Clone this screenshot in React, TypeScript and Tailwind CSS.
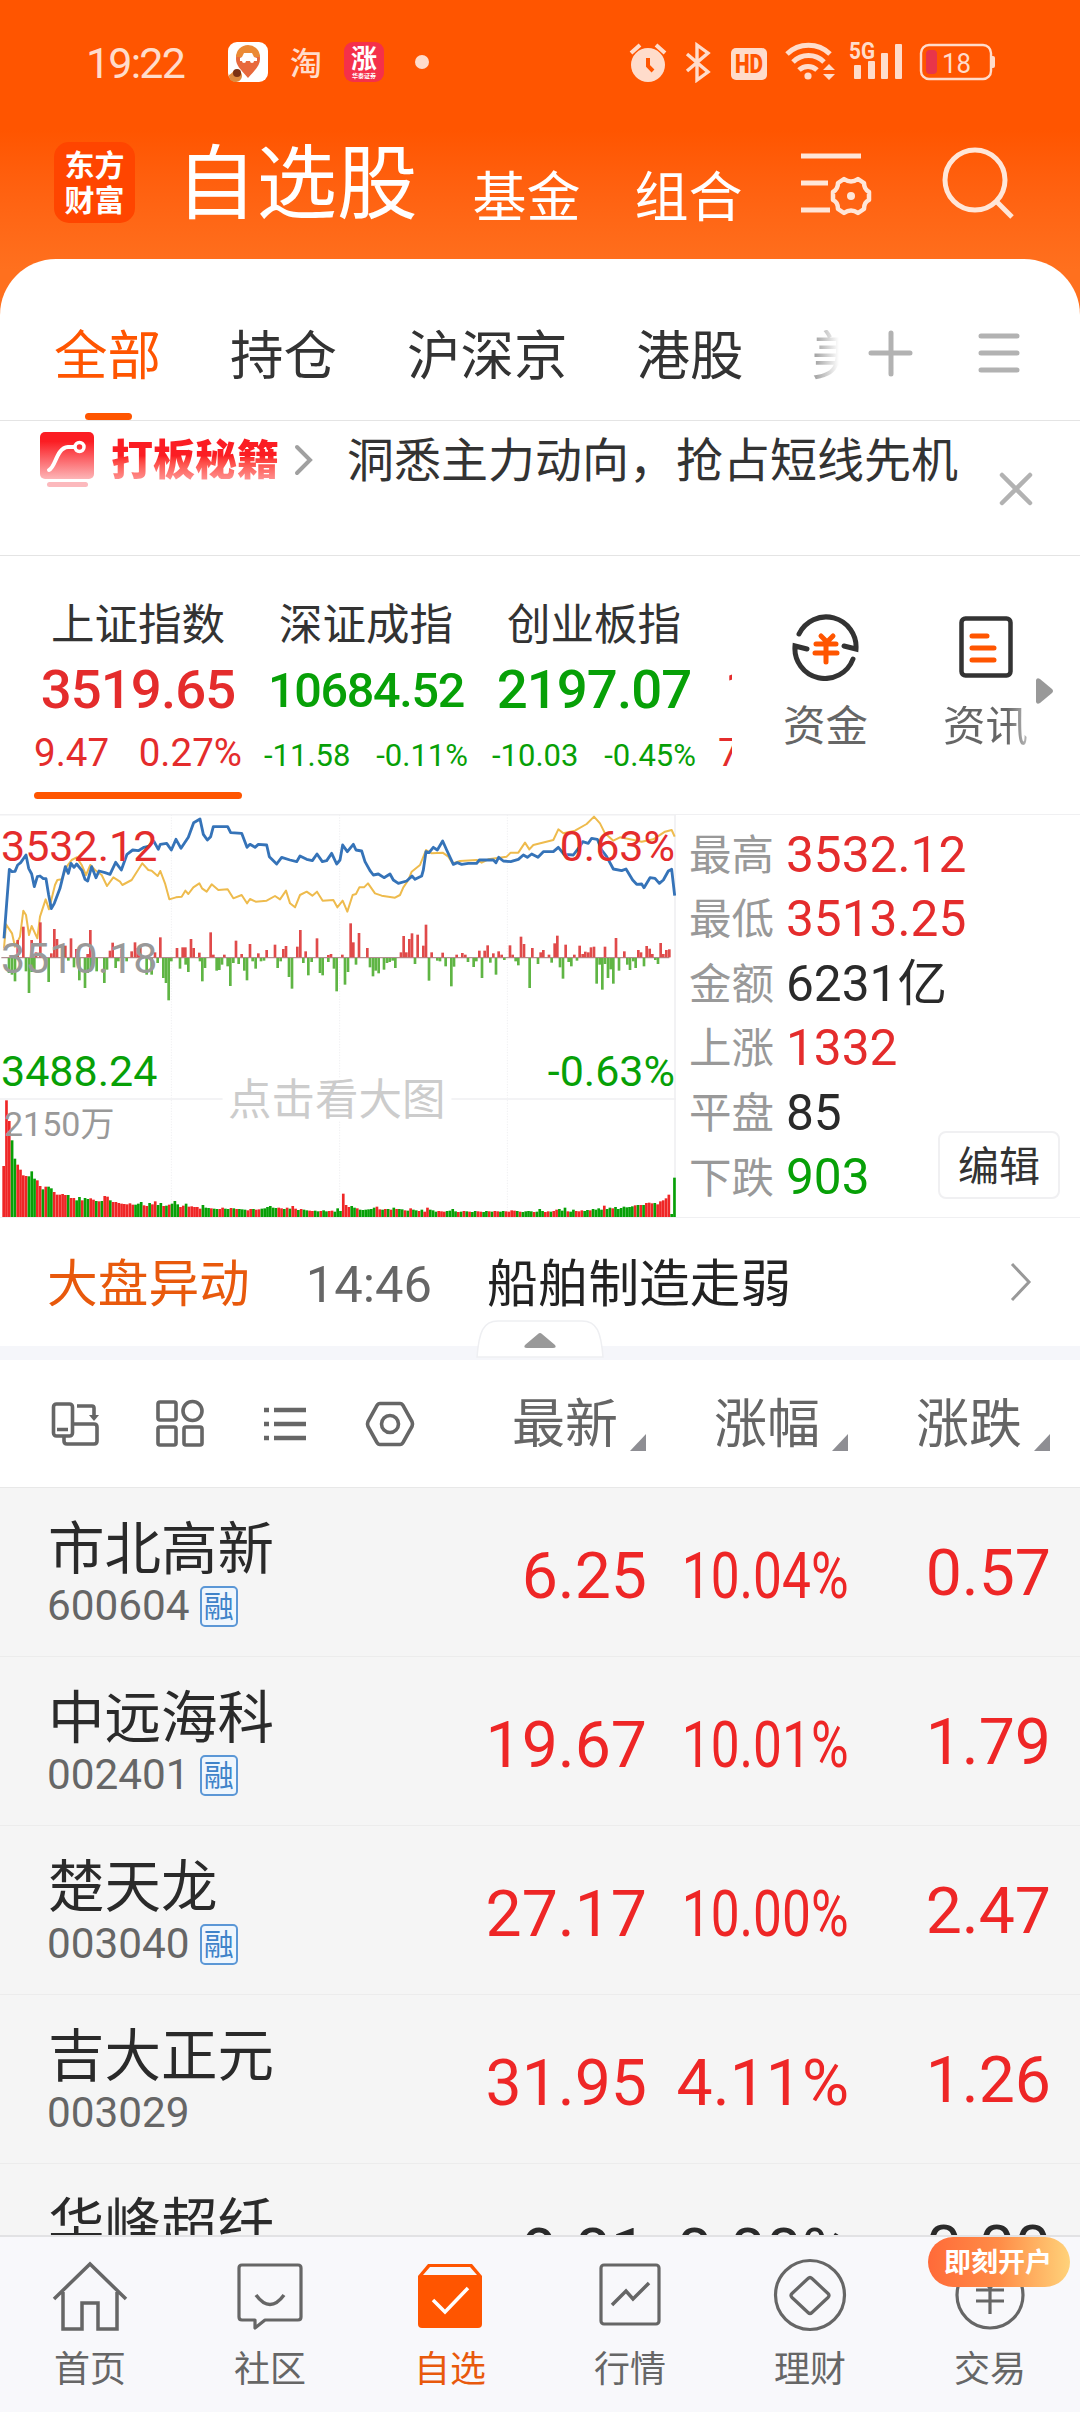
import type { ReactNode } from "react";
import clsx from "clsx";

type Point = [number, number];

// chart data, in chart units (3 per css pixel)
const PRICE: Point[] = [
  [12, 415], [20, 310], [28, 208], [36, 215], [45, 214], [53, 195], [62, 188], [78, 165], [86, 205], [95, 222],
  [103, 260], [112, 230], [120, 228], [130, 236], [138, 236], [146, 285], [154, 326], [163, 310], [180, 265],
  [196, 200], [205, 220], [213, 190], [222, 202], [230, 192], [246, 212], [255, 238], [263, 243], [275, 200],
  [288, 233], [297, 213], [315, 218], [330, 223], [347, 187], [364, 210], [381, 163], [398, 150], [415, 152],
  [432, 142], [448, 138], [461, 123], [475, 148], [481, 133], [500, 130], [514, 150], [528, 118], [543, 145],
  [565, 112], [581, 68], [600, 57], [610, 103], [622, 120], [632, 110], [640, 80], [683, 80], [692, 98],
  [725, 100], [741, 142], [750, 133], [765, 142], [775, 133], [800, 135], [808, 170], [830, 192], [845, 172],
  [870, 180], [890, 185], [900, 168], [920, 178], [937, 182], [951, 162], [967, 185], [980, 182], [995, 160],
  [1010, 192], [1020, 180], [1028, 135], [1042, 155], [1060, 133], [1068, 150], [1085, 153], [1095, 185],
  [1110, 212], [1120, 225], [1135, 222], [1152, 233], [1170, 222], [1180, 240], [1195, 250], [1220, 243],
  [1236, 228], [1245, 238], [1265, 228], [1270, 210], [1278, 155], [1287, 158], [1300, 142], [1312, 150],
  [1328, 123], [1340, 150], [1360, 193], [1372, 188], [1385, 193], [1405, 190], [1430, 190], [1438, 180],
  [1480, 180], [1488, 188], [1496, 172], [1510, 183], [1532, 185], [1555, 178], [1570, 165], [1582, 172],
  [1595, 162], [1614, 172], [1630, 155], [1660, 155], [1675, 142], [1692, 163], [1720, 165], [1739, 140],
  [1748, 125], [1765, 130], [1775, 115], [1792, 118], [1805, 150], [1820, 170], [1840, 207], [1865, 212],
  [1878, 207], [1898, 240], [1910, 253], [1925, 252], [1932, 263], [1950, 233], [1965, 235], [1978, 250],
  [1990, 240], [2005, 213], [2015, 208], [2024, 287],
];

const AVERAGE: Point[] = [
  [12, 445], [18, 373], [36, 400], [45, 440], [60, 410], [70, 332], [78, 345], [87, 405], [95, 378], [112, 415],
  [120, 350], [137, 298], [147, 328], [165, 255], [172, 240], [185, 238], [200, 200], [215, 180], [230, 172],
  [245, 195], [258, 225], [271, 195], [285, 210], [305, 225], [321, 258], [340, 232], [360, 245], [367, 255],
  [395, 240], [427, 190], [445, 210], [455, 212], [473, 228], [481, 213], [495, 250], [508, 298], [528, 292],
  [545, 290], [556, 272], [565, 282], [580, 262], [598, 250], [606, 265], [620, 275], [635, 253], [655, 270],
  [683, 268], [700, 295], [725, 285], [741, 310], [750, 297], [767, 305], [800, 302], [825, 288], [840, 298],
  [858, 272], [870, 310], [885, 322], [900, 285], [920, 275], [937, 287], [951, 275], [968, 302], [1000, 300],
  [1012, 322], [1028, 302], [1042, 335], [1058, 285], [1068, 282], [1078, 262], [1092, 262], [1104, 250],
  [1125, 280], [1145, 287], [1185, 293], [1200, 285], [1210, 262], [1225, 240], [1235, 215], [1260, 195],
  [1278, 150], [1295, 160], [1328, 158], [1345, 170], [1358, 190], [1380, 183], [1430, 180], [1445, 188],
  [1465, 178], [1520, 170], [1532, 158], [1555, 158], [1575, 128], [1588, 148], [1600, 135], [1660, 120],
  [1675, 88], [1690, 100], [1725, 92], [1760, 72], [1782, 50], [1800, 70], [1815, 100], [1840, 122],
  [1860, 112], [1890, 118], [1925, 125], [1960, 118], [1995, 95], [2015, 90], [2024, 110],
];

const UPS: Point[] = [
  [53, 52], [70, 92], [95, 52], [108, 15], [121, 105], [154, 12], [163, 85], [171, 55], [188, 20], [196, 35],
  [213, 57], [229, 25], [263, 10], [271, 82], [330, 20], [338, 44], [365, 25], [395, 18], [405, 45], [413, 28],
  [421, 30], [465, 15], [481, 60], [531, 28], [548, 30], [556, 30], [573, 55], [581, 28], [598, 14], [632, 75],
  [640, 8], [673, 8], [708, 50], [725, 10], [750, 40], [775, 12], [800, 22], [825, 38], [850, 25], [858, 34],
  [892, 32], [901, 82], [917, 18], [951, 57], [985, 7], [993, 10], [1027, 8], [1052, 102], [1060, 45],
  [1077, 73], [1102, 28], [1203, 15], [1211, 64], [1219, 15], [1228, 55], [1236, 72], [1253, 68], [1270, 35],
  [1278, 98], [1295, 15], [1328, 14], [1370, 8], [1387, 13], [1396, 8], [1438, 20], [1454, 20], [1463, 36],
  [1480, 12], [1496, 18], [1505, 8], [1530, 36], [1538, 8], [1563, 62], [1572, 40], [1597, 28], [1622, 15],
  [1630, 22], [1647, 8], [1664, 42], [1672, 65], [1697, 38], [1723, 8], [1739, 35], [1748, 10], [1756, 17],
  [1765, 15], [1773, 30], [1782, 32], [1815, 32], [1848, 58], [1873, 18], [1915, 22], [1923, 15], [1940, 34],
  [1949, 26], [1957, 10], [1982, 43], [1990, 10], [1999, 22], [2008, 24],
];

const DOWNS: Point[] = [
  [27, 45], [36, 50], [45, 70], [78, 40], [87, 105], [95, 42], [103, 35], [146, 72], [205, 8], [222, 28],
  [238, 67], [255, 90], [263, 45], [272, 35], [290, 40], [313, 75], [321, 35], [347, 30], [355, 10], [380, 10],
  [440, 50], [455, 50], [473, 15], [490, 60], [498, 75], [506, 127], [514, 10], [540, 32], [557, 20], [565, 42],
  [600, 10], [607, 70], [615, 30], [650, 38], [658, 36], [666, 20], [683, 25], [691, 84], [700, 15], [716, 18],
  [733, 38], [741, 67], [758, 10], [767, 32], [783, 10], [792, 8], [833, 30], [842, 10], [867, 57], [876, 92],
  [910, 15], [925, 52], [935, 12], [960, 45], [968, 52], [985, 12], [1002, 32], [1010, 100], [1035, 80],
  [1044, 42], [1068, 20], [1110, 28], [1119, 55], [1127, 38], [1136, 46], [1152, 35], [1161, 15], [1169, 12],
  [1178, 8], [1186, 30], [1245, 18], [1287, 68], [1312, 8], [1320, 10], [1337, 25], [1354, 85], [1362, 26],
  [1404, 12], [1421, 27], [1429, 10], [1446, 60], [1471, 14], [1488, 50], [1513, 6], [1547, 10], [1555, 22],
  [1589, 90], [1614, 18], [1655, 14], [1680, 28], [1689, 62], [1706, 12], [1714, 25], [1731, 8], [1790, 77],
  [1799, 20], [1807, 95], [1815, 18], [1824, 60], [1832, 34], [1840, 77], [1857, 38], [1882, 20], [1890, 36],
  [1900, 10], [1907, 30], [1932, 25], [1966, 6], [1974, 18],
];

const VOLUME = [
  153, 350, 288, 230, 175, 157, 142, 125, 123, 122, 137, 115, 110, 93, 83, 91, 91, 86, 75, 67, 67, 69, 66, 66, 57,
  57, 50, 60, 50, 57, 54, 56, 52, 48, 47, 48, 63, 61, 50, 45, 45, 42, 40, 39, 38, 41, 37, 37, 40, 45, 35, 33, 42,
  38, 47, 36, 42, 33, 34, 37, 40, 48, 38, 30, 34, 40, 31, 32, 30, 30, 25, 36, 28, 27, 26, 25, 24, 24, 28, 25, 24,
  27, 26, 24, 24, 23, 22, 20, 24, 24, 22, 23, 25, 26, 30, 33, 28, 27, 28, 26, 24, 28, 25, 33, 25, 21, 24, 22, 20,
  19, 18, 19, 17, 18, 20, 17, 18, 19, 16, 26, 18, 70, 36, 30, 33, 28, 26, 22, 21, 22, 23, 24, 28, 31, 23, 22, 24,
  24, 22, 28, 24, 24, 23, 20, 19, 26, 22, 20, 18, 22, 16, 28, 22, 20, 16, 18, 17, 16, 18, 19, 24, 17, 15, 16, 18,
  17, 16, 15, 18, 17, 16, 15, 18, 17, 16, 18, 17, 16, 18, 17, 16, 20, 19, 18, 16, 15, 17, 18, 17, 15, 16, 24, 18,
  15, 17, 16, 18, 22, 24, 19, 28, 17, 16, 22, 18, 17, 20, 18, 21, 20, 24, 22, 26, 22, 34, 24, 28, 26, 30, 24, 27,
  31, 29, 30, 32, 35, 36, 36, 36, 42, 43, 41, 42, 38, 47, 50, 56, 67, 9, 118,
];

const VOLUME_TREND =
  "rrrggrrrrgggrrgrggrrrrrgrrggrggrrgrgrrgrrrrrrrrgggrrgrrggrgrgggrrgrrrrrgggrggrrggrgrgggrrgrrggg" +
  "gggrrgrgrrgrggrrggrggrrgggrrrggrggggggrrgrgrgrggrgrggrgrrgggrrrggggrgrgrggrrggrgrrggrrrrgrggggrgggrrgrrgggrggrrrggrg" +
  "gggrggrgggggggrgrgrrrgrrrrrg";

const toPoints = (points: Point[]) => points.map((p) => p.join(",")).join(" ");

function StatusBar() {
  return (
    <div className="flex h-[124px] shrink-0 items-center pl-[86px] text-[#ffdccb]">
      <span className="mt-[2px] w-[142px] text-[43px] leading-none tracking-[-1.8px]">19:22</span>
      <svg width="40" height="40" viewBox="0 0 40 40">
        <rect width="40" height="40" rx="9" fill="#fff" />
        <path d="M20 36C12 27 8 23 8 17a12 12 0 0 1 24 0c0 6-4 10-12 19Z" fill="#e8693c" />
        <path d="M8 15a12 12 0 0 1 24 0Z" fill="#eb8a35" />
        <path d="M12 19v-3l2-1 2-4h8l2 4 3 1v3h-3a2 2 0 0 1-4 0h-4a2 2 0 0 1-4 0Z" fill="#fff" />
        <path d="M1 33c3-1 4-5 7-5 4 0 6 3 6 6s-3 6-6 6c-4 0-7-2-7-7Z" fill="#dd8a3e" />
        <circle cx="9" cy="31" r="4" fill="#7b3213" />
      </svg>
      <span className="ml-[22px] mt-[3px] text-[32px] font-medium leading-none">淘</span>
      <div className="ml-[22px] flex h-10 w-10 flex-col items-center overflow-hidden rounded-[9px] bg-[#f5304a] pt-[4px] text-white">
        <span className="text-[26px] font-bold leading-[26px]">涨</span>
        <span className="text-[6px] font-bold leading-[8px]">华泰证券</span>
      </div>
      <div className="ml-[31px] h-[14px] w-[14px] rounded-full bg-[#ffdccb]" />
      <svg className="ml-[200px]" width="368" height="42" viewBox="629 41 368 42" fill="#ffdccb">
        <path d="m631 53 9-8M665 53l-9-8" stroke="#ffdccb" strokeWidth="4" />
        <ellipse cx="648" cy="65" rx="17" ry="17" />
        <path d="M648 58v8l5 5" stroke="#ff5500" strokeWidth="4" fill="none" />
        <path d="m687 54 21 18-11 8V45l11 8-21 18" stroke="#ffdccb" strokeWidth="3.4" fill="none" />
        <rect x="731" y="48" width="36" height="32" rx="5" />
        <text x="749" y="73" textAnchor="middle" fontSize="25" fontWeight="900" fill="#ff5500" textLength="28" lengthAdjust="spacingAndGlyphs">HD</text>
        <g fill="none" stroke="#ffdccb" strokeWidth="5">
          <path d="M787 54a31 31 0 0 1 43 0M793 62a22 22 0 0 1 31 0M799 70a13 13 0 0 1 18 0" />
        </g>
        <circle cx="808" cy="76" r="3.6" />
        <path d="m829 64 6 6h-12zM829 80l6-6h-12z" />
        <text x="849" y="59" fontSize="23" fontWeight="700" textLength="26" lengthAdjust="spacingAndGlyphs">5G</text>
        <rect x="854" y="65" width="7" height="14" rx="1" />
        <rect x="868" y="61" width="7" height="18" rx="1" />
        <rect x="881" y="53" width="7" height="26" rx="1" />
        <rect x="895" y="44" width="7" height="35" rx="1" />
        <rect x="921" y="45" width="70" height="34" rx="8" fill="none" stroke="#ffdccb" strokeWidth="2.4" />
        <path d="M992 56h1a2 2 0 0 1 2 2v8a2 2 0 0 1-2 2h-1z" />
        <rect x="926" y="50" width="11" height="24" rx="4" fill="#e8354a" />
        <text x="942" y="73" fontSize="28" textLength="29" lengthAdjust="spacingAndGlyphs">18</text>
      </svg>
    </div>
  );
}

function Header() {
  return (
    <div className="flex h-[135px] shrink-0 items-start pl-[54px] text-white">
      <div className="mt-[18px] grid h-[81px] w-[81px] content-center justify-center rounded-[15px] bg-[#ff4500] text-center text-[30px] font-bold leading-[35px]">
        <span>东方</span>
        <span>财富</span>
      </div>
      <span className="ml-[41px] mt-[21px] text-[80.500px] leading-none">自选股</span>
      <span className="ml-[55px] mt-[48px] text-[54px] leading-none">基金</span>
      <span className="ml-[54px] mt-[48px] text-[54px] leading-none">组合</span>
      <svg className="ml-[57px] mt-[27px]" width="72" height="68" viewBox="0 0 72 68" fill="none" stroke="#ffe6d8" strokeWidth="5">
        <path d="M1 5h60M1 32h27M1 59h29" />
        <path
          strokeWidth="4.5"
          strokeLinejoin="round"
          d="M44 28q7 5 14 0l6 4q0 6 5 9v8q-5 2-5 9l-6 4q-7-5-14 0l-6-4q0-7-5-9v-8q5-3 5-9Z"
        />
        <circle cx="51" cy="45" r="4" fill="#ffe6d8" stroke="none" />
      </svg>
      <svg className="ml-[70px] mt-[22px]" width="72" height="74" viewBox="0 0 72 74" fill="none" stroke="#ffe6d8" strokeWidth="5">
        <circle cx="33" cy="34" r="30" />
        <path d="m54 55 16 16" />
      </svg>
    </div>
  );
}

function Tabs() {
  return (
    <div className="flex h-[162px] shrink-0 items-center border-b border-[#e4e4e4] pl-[54px] pt-[35px] text-[53.500px] leading-none text-[#333]">
      <div className="relative text-[#ff5500]">
        全部
        <div className="absolute left-[31px] top-[83px] h-[7px] w-[47px] rounded-full bg-[#ff5500]" />
      </div>
      <span className="ml-[69px]">持仓</span>
      <span className="ml-[70px]">沪深京</span>
      <span className="ml-[69px]">港股</span>
      <div className="ml-[68px] w-[27px] overflow-hidden bg-linear-to-r from-[#999] to-white bg-clip-text text-transparent">美</div>
      <svg className="-mt-[8px] ml-[28px]" width="154" height="48" viewBox="0 0 154 48" stroke="#b2b2b2" strokeWidth="5" strokeLinecap="round">
        <path d="M4 24h39M24 4v41M114 7h36M114 24h36M114 41h36" />
      </svg>
    </div>
  );
}

function Banner() {
  return (
    <div className="flex h-[135px] shrink-0 items-start border-b border-[#e4e4e4] pl-[40px]">
      <svg className="mt-[11px]" width="54" height="56" viewBox="0 0 54 56">
        <defs>
          <linearGradient id="banner" x1="0" y1="0" x2="0" y2="1">
            <stop offset="0.2" stopColor="#fb1d23" />
            <stop offset="1" stopColor="#fdb5b7" />
          </linearGradient>
        </defs>
        <rect width="54" height="47" rx="5" fill="url(#banner)" />
        <rect x="7" y="50" width="41" height="5" rx="2.500" fill="#fcb9bd" />
        <path d="M9 38c7-3 7-22 19-23h6" stroke="#fff" strokeWidth="4" fill="none" strokeLinecap="round" />
        <circle cx="39.500" cy="15" r="4.500" stroke="#fff" strokeWidth="3.500" fill="none" />
      </svg>
      <span className="ml-[17px] mt-[17px] bg-linear-to-b from-[#fb1d23] from-40% to-[#fd9a9c] bg-clip-text text-[42px] font-black leading-[45px] text-transparent">
        打板秘籍
      </span>
      <svg className="ml-[15px] mt-[23px]" width="20" height="32" viewBox="0 0 20 32" fill="none" stroke="#a0a0a0" strokeWidth="4" strokeLinecap="round">
        <path d="m3 3 13 13L3 29" />
      </svg>
      <span className="ml-[33px] mt-[16px] text-[47px] leading-none text-[#333]">洞悉主力动向，抢占短线先机</span>
      <svg className="ml-[40px] mt-[50px]" width="36" height="36" viewBox="0 0 36 36" stroke="#b2b2b2" strokeWidth="4.500" strokeLinecap="round">
        <path d="m4 4 28 28M32 4 4 32" />
      </svg>
    </div>
  );
}

type IndexProps = {
  name: string;
  value: string;
  diff: string;
  rate: string;
  up?: boolean;
  active?: boolean;
};

const IndexCard = ({ name, value, diff, rate, up, active }: IndexProps) => {
  return (
    <div className={clsx("flex w-[228px] shrink-0 flex-col items-center", up ? "text-[#e42c2c]" : "text-[#07a007]")}>
      <span className="mt-[48px] h-[44px] text-[43.500px] leading-none text-[#333]">{name}</span>
      <span
        className={clsx(
          "mt-[9px] flex h-[64px] items-end font-medium",
          value.length > 7 ? "text-[48.500px] leading-[60px] tracking-[-1.300px]" : "text-[54.500px] leading-[64px] tracking-[-0.900px]",
        )}
      >
        {value}
      </span>
      <div
        className={clsx(
          "mt-[9px] flex h-[46px] w-full items-end justify-between",
          up ? "px-[10px] text-[38.500px] leading-[47px]" : "px-[12px] text-[31px] leading-[41px]",
        )}
      >
        <span>{diff}</span>
        <span>{rate}</span>
      </div>
      {active && <div className="mt-[16px] h-[7px] w-[208px] rounded-full bg-[#ff5500]" />}
    </div>
  );
};

function Indexes() {
  return (
    <div className="flex h-[258px] shrink-0 items-start">
      <div className="flex w-[732px] overflow-hidden pl-[24px]">
        <IndexCard name="上证指数" value="3519.65" diff="9.47" rate="0.27%" up active />
        <IndexCard name="深证成指" value="10684.52" diff="-11.58" rate="-0.11%" />
        <IndexCard name="创业板指" value="2197.07" diff="-10.03" rate="-0.45%" />
        <IndexCard name="" value="1045.31" diff="7.82" rate="0.15%" up />
      </div>
      <div className="ml-[51px] flex flex-col items-center text-[42.500px] leading-none text-[#666]">
        <svg className="mt-[55px]" width="70" height="70" viewBox="0 0 70 70" fill="none" stroke="#333" strokeWidth="5" strokeLinecap="round">
          <path d="M8 23a30 30 0 0 1 57 15l-12-3M62 48A30 30 0 0 1 4 35l12 3" />
          <path d="m30 25 6 6 6-6M25 33h20M24 42h22M35 33v18" stroke="#ff5500" />
        </svg>
        <span className="mt-[25px]">资金</span>
      </div>
      <div className="ml-[75px] flex flex-col items-center text-[42.500px] leading-none text-[#666]">
        <svg className="mt-[60px]" width="54" height="62" viewBox="0 0 54 62" fill="none" stroke="#333" strokeWidth="4.500" strokeLinecap="round">
          <rect x="2.500" y="2.500" width="49" height="57" rx="4" />
          <path d="M13 20h15M13 32h22M13 44h22" stroke="#ff5500" strokeWidth="5" />
        </svg>
        <span className="mt-[28px] bg-linear-to-r from-[#666] from-75% to-[#bbb] bg-clip-text text-transparent">资讯</span>
      </div>
      <svg className="ml-[8px] mt-[121px]" width="18" height="28" viewBox="0 0 18 28" fill="#999">
        <path d="M0 3q1-3 4-1l12 10q2 2 0 4L4 26q-3 2-4-1Z" />
      </svg>
    </div>
  );
}

function Chart() {
  return (
    <div className="relative w-[676px] shrink-0 leading-none">
      <svg width="676" height="404" viewBox="0 42 2028 1212">
        <g fill="none" stroke="#f0f0f2" strokeWidth="5">
          <path d="M0 44h2028M0 897h668M1354 897h674M2025 44v1210" />
          <path d="M514 44v1210M1019 44v790M1019 965v289M1522 44v1210" strokeWidth="3" strokeDasharray="4 4" />
        </g>
        <polyline points={toPoints(AVERAGE)} fill="none" stroke="#eebb4d" strokeWidth="6" strokeLinejoin="round" />
        <polyline points={toPoints(PRICE)} fill="none" stroke="#3573b8" strokeWidth="8.500" strokeLinejoin="round" />
        <path d="M4 473h2004" stroke="#b08f8f" strokeWidth="4" />
        {UPS.map(([x, h]) => (
          <rect key={x} x={x - 4} y={472 - h} width="8" height={h} fill="#e04a4a" />
        ))}
        {DOWNS.map(([x, h]) => (
          <rect key={x} x={x - 4} y={474} width="8" height={h} fill="#5fb544" />
        ))}
        {VOLUME.map((h, i) => (
          <rect key={i} x={7 + i * 8.42} y={1251 - h} width="8" height={h} fill={VOLUME_TREND[i] === "r" ? "#ef2626" : "#07a007"} />
        ))}
      </svg>
      <span className="absolute left-[1px] top-[11px] text-[43px] text-[#e42c2c]">3532.12</span>
      <span className="absolute left-[1px] top-[123px] text-[43px] text-[#999]">3510.18</span>
      <span className="absolute left-[1px] top-[236px] text-[43px] text-[#07a007]">3488.24</span>
      <span className="absolute right-[1px] top-[11px] text-[43px] text-[#e42c2c]">0.63%</span>
      <span className="absolute right-[1px] top-[236px] text-[43px] text-[#07a007]">-0.63%</span>
      <span className="absolute left-[4px] top-[293px] text-[34px] text-[#999]">2150万</span>
      <span className="absolute left-[228px] top-[265px] text-[43.500px] text-[#ccc]">点击看大图</span>
    </div>
  );
}

const STATS = [
  { label: "最高", value: "3532.12", color: "text-[#e42c2c]" },
  { label: "最低", value: "3513.25", color: "text-[#e42c2c]" },
  { label: "金额", value: "6231亿", color: "text-[#2a2a2a]" },
  { label: "上涨", value: "1332", color: "text-[#e42c2c]" },
  { label: "平盘", value: "85", color: "text-[#2a2a2a]" },
  { label: "下跌", value: "903", color: "text-[#07a007]" },
];

function Market() {
  return (
    <div className="flex h-[404px] shrink-0 border-b border-[#f0f0f2]">
      <Chart />
      <div className="relative flex flex-1 flex-col border-t border-[#f0f0f2] pl-[13px] pt-[8px]">
        {STATS.map((s) => (
          <div key={s.label} className="flex h-[64.600px] items-center leading-none">
            <span className="w-[97px] pt-[1px] text-[42.500px] text-[#999]">{s.label}</span>
            <span className={clsx("text-[49.600px]", s.color)}>{s.value}</span>
          </div>
        ))}
        <div className="absolute bottom-[18px] right-[20px] flex h-[68px] w-[122px] items-center justify-center rounded-[8px] border-2 border-[#f0f0f2] bg-white pt-[4px] text-[41px] leading-none text-[#333]">
          编辑
        </div>
      </div>
    </div>
  );
}

function News() {
  return (
    <div className="relative flex h-[142px] shrink-0 items-center border-b-[14px] border-[#f5f6fa] pl-[47px] text-[50.700px] leading-none">
      <span className="pt-[7px] text-[#e8590c]">大盘异动</span>
      <span className="ml-[56px] pt-[6px] text-[#666]">14:46</span>
      <span className="ml-[55px] pt-[7px] text-[#222]">船舶制造走弱</span>
      <svg className="ml-auto mr-[47px]" width="24" height="40" viewBox="0 0 24 40" fill="none" stroke="#999" strokeWidth="3">
        <path d="m3 2 17 18L3 38" />
      </svg>
      <svg className="absolute -bottom-[12px] left-[476px]" width="128" height="38" viewBox="0 0 128 38">
        <path d="M1 37C3 12 7 1 22 1h84c15 0 19 11 21 36Z" fill="#fff" stroke="#eeeff2" strokeWidth="1.500" />
        <path d="M62 14q2-2 4 0l13 11q2 3-2 3H51q-4 0-2-3Z" fill="#999" />
      </svg>
    </div>
  );
}

const Column = ({ title }: { title: string }) => (
  <div className="flex w-[202px] items-center">
    <span className="pt-[3px]">{title}</span>
    <svg className="ml-[12px] mt-[38px]" width="16" height="17" viewBox="0 0 16 17" fill="#8e8e93">
      <path d="M16 0v17H0Z" />
    </svg>
  </div>
);

function Toolbar() {
  return (
    <div className="flex h-[128px] shrink-0 items-center border-b border-[#e8e8e8] pl-[50px] text-[53px] leading-none text-[#666]">
      <svg className="shrink-0" width="366" height="50" viewBox="50 1399 366 50" fill="none" stroke="#666" strokeWidth="3.600">
        <rect x="53.500" y="1404" width="19" height="32" rx="3" />
        <path d="M57 1429.500h11M77 1406h15q2 0 2 2v9M64 1436v5q0 3 3 3h27q3 0 3-3v-14q0-3-3-3H73" />
        <path d="m89 1415 5 6 5-6Z" fill="#666" stroke="none" />
        <rect x="158" y="1402" width="18" height="18" rx="2" />
        <circle cx="192.500" cy="1411" r="9.500" />
        <rect x="158" y="1427" width="18" height="18" rx="2" />
        <rect x="184" y="1427" width="18" height="18" rx="2" />
        <path d="M274 1410h32M274 1424h32M274 1438h32M264 1410h5M264 1424h5M264 1438h5" strokeWidth="4.500" />
        <path d="m380 1403.500h20q2 0 3 2l9 16q1 2.500 0 5l-9 16q-1 2-3 2h-20q-2 0-3-2l-9-16q-1-2.500 0-5l9-16q1-2 3-2Z" />
        <circle cx="390" cy="1424" r="8.500" />
      </svg>
      <div className="ml-[96px] flex shrink-0">
        <Column title="最新" />
        <Column title="涨幅" />
        <Column title="涨跌" />
      </div>
    </div>
  );
}

type Stock = {
  name: string;
  code: string;
  price: string;
  rate: string;
  change: string;
  margin?: boolean;
  flat?: boolean;
};

const STOCKS: Stock[] = [
  { name: "市北高新", code: "600604", price: "6.25", rate: "10.04%", change: "0.57", margin: true },
  { name: "中远海科", code: "002401", price: "19.67", rate: "10.01%", change: "1.79", margin: true },
  { name: "楚天龙", code: "003040", price: "27.17", rate: "10.00%", change: "2.47", margin: true },
  { name: "吉大正元", code: "003029", price: "31.95", rate: "4.11%", change: "1.26" },
  { name: "华峰超纤", code: "300180", price: "9.81", rate: "0.00%", change: "0.00", flat: true },
];

const StockRow = ({ stock }: { stock: Stock }) => (
  <div
    className={clsx(
      "flex h-[169px] shrink-0 border-b border-[#ececec] pl-[48px] pr-[29px] text-[64.300px] leading-none",
      stock.flat ? "text-[#2a2a2a]" : "text-[#ee2626]",
    )}
  >
    <div className="w-[299px] pt-[34px]">
      <div className="text-[56.500px] text-[#2a2a2a]">{stock.name}</div>
      <div className="-ml-[1px] mt-[7px] flex h-[42px] items-center text-[42.300px] text-[#666]">
        {stock.code}
        {stock.margin && (
          <span className="ml-[10px] flex h-[41px] w-[38px] items-center justify-center rounded-[5px] border-2 border-[#5b97d6] bg-[#eff6fd] text-[30px] text-[#3f83c9]">
            融
          </span>
        )}
      </div>
    </div>
    <span className="w-[300px] pt-[56px] text-right">{stock.price}</span>
    <span className="flex w-[202px] justify-end pt-[56px]">
      <span className={clsx("origin-right", stock.rate.length > 5 && "scale-x-[0.8]")}>{stock.rate}</span>
    </span>
    <span className="w-[202px] pt-[53px] text-right">{stock.change}</span>
  </div>
);

type NavItemProps = {
  label: string;
  children: ReactNode;
  active?: boolean;
  badge?: string;
};

const NavItem = ({ label, children, active, badge }: NavItemProps) => (
  <div className={clsx("relative flex flex-1 flex-col items-center pt-[22px]", active ? "text-[#e8590c]" : "text-[#666]")}>
    <svg className="overflow-visible" width="76" height="76" viewBox="0 0 76 76" fill="none" stroke="currentColor" strokeWidth="3.200">
      {children}
    </svg>
    <span className="mt-[17px] text-[36px] leading-none">{label}</span>
    {badge && (
      <span className="absolute left-[28px] top-0 flex h-[50px] w-[142px] items-center justify-center rounded-full bg-linear-to-r from-[#ff6a39] via-[#ff8c47] to-[#ffd27a] pr-[2px] pt-[2px] text-[27px] font-bold leading-none text-white">
        {badge}
      </span>
    )}
  </div>
);

function BottomNav() {
  return (
    <div className="flex h-[177px] shrink-0 border-t-2 border-[#e2e2e4] bg-[#f8f8fb]">
      <NavItem label="首页">
        <path d="M2 40 38 5l36 35M11 33v37h19V44h16v26h19V33" strokeWidth="3.500" />
      </NavItem>
      <NavItem label="社区">
        <path d="M10 6h56q3 0 3 3v49q0 3-3 3H33l-10 8v-8H10q-3 0-3-3V9q0-3 3-3Z" strokeLinejoin="round" />
        <path d="M24 36q14 19 28 0" strokeWidth="3.500" />
      </NavItem>
      <NavItem label="自选" active>
        <path d="M6 17 16 5h44l10 12v48q0 4-4 4H10q-4 0-4-4Z" fill="#ff5500" stroke="none" />
        <path d="m18 8-7 8h54l-7-8Z" fill="#f8f8fb" stroke="none" />
        <path d="m21 41 12 12 23-24" stroke="#fff" strokeWidth="3.500" />
      </NavItem>
      <NavItem label="行情">
        <rect x="9" y="6" width="58" height="59" rx="3" />
        <path d="m20 46 14-14 7 8 16-16" strokeWidth="3.500" />
      </NavItem>
      <NavItem label="理财">
        <circle cx="38" cy="36" r="34.500" />
        <path d="m36 19.500-16 15q-2 2 0 4l16 15q2 2 4 0l16-15q2-2 0-4l-16-15q-2-2-4 0Z" />
      </NavItem>
      <NavItem label="交易" badge="即刻开户">
        <circle cx="38" cy="36" r="33" />
        <path d="m28 17 10 12 10-12M24 31h28M24 42h28M38 29v26" />
      </NavItem>
    </div>
  );
}

const App = () => {
  return (
    <div className="flex h-[2412px] w-[1080px] flex-col overflow-hidden bg-linear-to-b from-[#ff5500] from-[130px] to-[#ff701e] to-[270px] font-[Roboto,'Noto_Sans_CJK_SC',sans-serif]">
      <StatusBar />
      <Header />
      <div className="flex min-h-0 flex-1 flex-col overflow-hidden rounded-t-[56px] bg-white">
        <Tabs />
        <Banner />
        <Indexes />
        <Market />
        <News />
        <Toolbar />
        <div className="flex min-h-0 flex-1 flex-col overflow-hidden bg-[#f5f5f5]">
          {STOCKS.map((stock) => (
            <StockRow key={stock.code} stock={stock} />
          ))}
        </div>
      </div>
      <BottomNav />
    </div>
  );
};

export default App;
